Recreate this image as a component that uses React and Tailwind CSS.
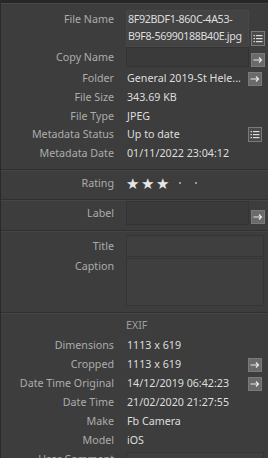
const ArrowBtn = () => (
  <div className="w-[14px] h-[14px] bg-[#6a6a6a] border border-[#7a7a7a] flex items-center justify-center">
    <svg width="10" height="8" viewBox="0 0 10 8" fill="none" stroke="#e8e8e8" strokeWidth="1.2">
      <path d="M0.5 4H8.5M6 1.5L8.5 4L6 6.5" />
    </svg>
  </div>
);

const ListBtn = () => (
  <div className="w-[14px] h-[15px] bg-[#4a4a4a] border border-[#7a7a7a] flex items-center justify-center">
    <svg width="10" height="9" viewBox="0 0 10 9" fill="#dcdcdc">
      <rect x="0.5" y="1" width="1.5" height="1.2" />
      <rect x="3" y="1" width="6.5" height="1.2" />
      <rect x="0.5" y="4" width="1.5" height="1.2" />
      <rect x="3" y="4" width="6.5" height="1.2" />
      <rect x="0.5" y="7" width="1.5" height="1.2" />
      <rect x="3" y="7" width="6.5" height="1.2" />
    </svg>
  </div>
);

function Row({ label, value, btn, h = "h-[19px]" }) {
  return (
    <div className={`flex items-center ${h}`}>
      <div className="w-[113px] text-right text-[#acacac] shrink-0">{label}</div>
      <div className="ml-[13px] flex-1 text-[#dedede] whitespace-nowrap">{value}</div>
      <div className="w-[14px] mr-[6px] flex justify-center">{btn}</div>
    </div>
  );
}

function Sep() {
  return <div className="border-t border-[#303030] border-b border-b-[#454545]" />;
}

export default function App() {
  return (
    <div className="w-[268px] h-[458px] overflow-hidden bg-[#3d3d3d] border-l border-[#2a2a2a] text-[10.7px] leading-[17px] font-['Noto_Sans',sans-serif]">
      <div className="h-[3px] bg-[#272727]" />
      <div className="h-[1px] bg-[#474747]" />

      <div className="pt-[6px]">
        {/* file name */}
        <div className="flex h-[37px]">
          <div className="w-[113px] text-right text-[#acacac] shrink-0 pt-[1px]">File Name</div>
          <div className="ml-[12px] w-[123px] bg-[#434343] border border-[#474747] text-[#dedede] pl-[1px] whitespace-nowrap overflow-hidden tracking-[-0.35px]">
            <div>8F92BDF1-860C-4A53-</div>
            <div>B9F8-56990188B40E.jpg</div>
          </div>
          <div className="ml-[2px] w-[14px] flex items-end pb-[1px]">
            <ListBtn />
          </div>
        </div>

        {/* copy name */}
        <div className="flex h-[20px] items-stretch">
          <div className="w-[113px] text-right text-[#acacac] shrink-0 flex items-center">
            <span className="w-full">Copy Name</span>
          </div>
          <div className="ml-[12px] w-[123px] bg-[#3a3a3a] border border-[#333333]" />
          <div className="ml-[2px] w-[14px] flex items-end">
            <ArrowBtn />
          </div>
        </div>

        <div className="h-[2px]" />
        <Row label="Folder" value="General 2019-St Hele..." btn={<ArrowBtn />} />
        <Row label="File Size" value="343.69 KB" h="h-[18.75px]" />
        <Row label="File Type" value="JPEG" h="h-[18.75px]" />
        <Row label="Metadata Status" value="Up to date" btn={<ListBtn />} h="h-[18.75px]" />
        <Row label="Metadata Date" value="01/11/2022 23:04:12" h="h-[18.75px]" />
      </div>

      <div className="h-[6px]" />
      <Sep />

      <div className="flex items-center h-[24px] mb-[4px]">
        <div className="w-[113px] text-right text-[#acacac] shrink-0">Rating</div>
        <div className="ml-[12px] flex items-center gap-[2px] text-[#e6e6e6] text-[15px] leading-[15px]">
          <span>★</span>
          <span>★</span>
          <span>★</span>
          <span className="w-[2px] h-[2px] bg-[#9a9a9a] ml-[8px]" />
          <span className="w-[2px] h-[2px] bg-[#9a9a9a] ml-[12px]" />
        </div>
      </div>

      <Sep />

      <div className="flex h-[24px] mb-[5px]">
        <div className="w-[113px] text-right text-[#acacac] shrink-0 flex items-center">
          <span className="w-full">Label</span>
        </div>
        <div className="ml-[12px] w-[123px] bg-[#3a3a3a] border border-[#333333]" />
        <div className="ml-[2px] w-[14px] flex items-end pb-[1px]">
          <ArrowBtn />
        </div>
      </div>

      <Sep />

      <div className="flex pt-[3px] pb-[6px]">
        <div className="w-[113px] text-right text-[#acacac] shrink-0">
          <div className="h-[22px] flex items-center justify-end">Title</div>
          <div className="pt-[1px]">Caption</div>
        </div>
        <div className="ml-[12px] w-[138px] flex flex-col">
          <div className="h-[22px] bg-[#3f3f3f] border border-[#353535]" />
          <div className="h-[48px] mt-[1px] bg-[#3f3f3f] border border-[#353535]" />
        </div>
      </div>

      <Sep />

      <div className="h-[22px] flex items-center pl-[125px] text-[#9d9d9d]">EXIF</div>

      <Row label="Dimensions" value="1113 x 619" />
      <Row label="Cropped" value="1113 x 619" btn={<ArrowBtn />} />
      <Row label="Date Time Original" value="14/12/2019 06:42:23" btn={<ArrowBtn />} />
      <Row label="Date Time" value="21/02/2020 21:27:55" />
      <Row label="Make" value="Fb Camera" />
      <Row label="Model" value="iOS" />
      <div className="flex h-[19px] items-start">
        <div className="w-[113px] text-right text-[#acacac] shrink-0 pt-[1px]">User Comment</div>
        <div className="ml-[12px] w-[138px] h-[19px] mt-[2px] bg-[#3f3f3f] border border-[#353535]" />
      </div>
    </div>
  );
}
